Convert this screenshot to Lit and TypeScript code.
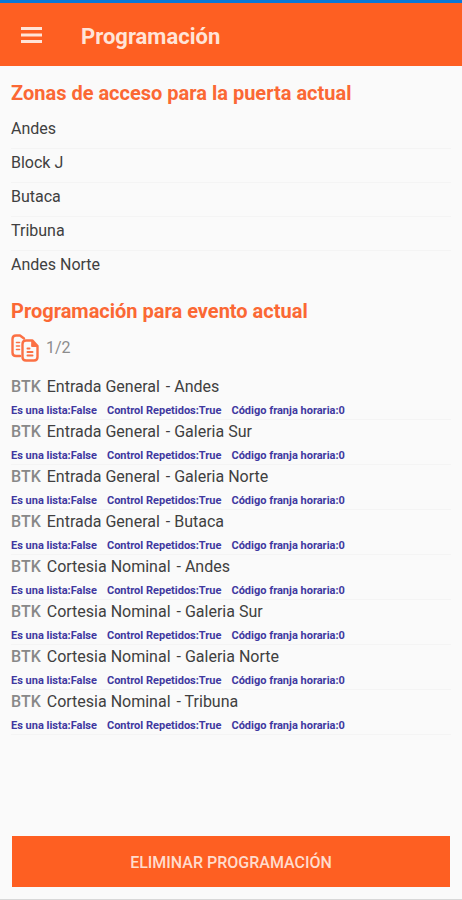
import { LitElement, html, css } from "lit";
import { customElement, state } from "lit/decorators.js";

interface Ticket {
  kind: string;
  zone: string;
}

@customElement("app-root")
export class AppRoot extends LitElement {
  static styles = css`
    :host {
      display: flex;
      flex-direction: column;
      box-sizing: border-box;
      min-height: 100vh;
      background: #fafafa;
      border-top: 3px solid #0a78d7;
      border-bottom: 1px solid #d8d8d8;
      font-family: Roboto, "Liberation Sans", sans-serif;
      color: #404040;
    }
    .bar {
      display: flex;
      align-items: center;
      gap: 38px;
      height: 63px;
      padding: 0 20px;
      background: #fe5f22;
      color: #ffe4d8;
    }
    .menu {
      display: flex;
      padding: 0;
      border: 0;
      background: none;
      color: inherit;
    }
    .title {
      margin: 0;
      font-size: 22px;
      line-height: 28px;
      font-weight: 700;
      padding-top: 4px;
    }
    .content {
      flex: 1;
      padding: 13px 11px 24px;
    }
    .heading {
      margin: 0;
      font-size: 20px;
      line-height: 28px;
      font-weight: 700;
      color: #fb6834;
    }
    .list {
      list-style: none;
      margin: 0;
      padding: 0;
    }
    .zones {
      padding: 8px 0 12px;
    }
    .zone {
      box-sizing: border-box;
      height: 34px;
      padding-top: 4px;
      font-size: 16px;
      line-height: 20px;
      border-bottom: 1px solid #f4f4f4;
    }
    .zone:last-child {
      border-bottom-color: transparent;
    }
    .count {
      display: flex;
      align-items: center;
      gap: 7px;
      height: 28px;
      margin: 9px 0 13px;
      font-size: 16px;
      line-height: 20px;
      color: #8c8c8c;
    }
    .ticket {
      box-sizing: border-box;
      height: 45px;
      padding-top: 2px;
      border-bottom: 1px solid #f4f4f4;
    }
    .name {
      display: flex;
      gap: 6px;
      font-size: 16px;
      line-height: 20px;
    }
    .code {
      font-weight: 500;
      color: #888888;
    }
    .kind {
      display: flex;
      gap: 6px;
    }
    .facts {
      display: flex;
      gap: 10px;
      padding-top: 7px;
      font-size: 11px;
      line-height: 14px;
      font-weight: 700;
      color: #4038a0;
    }
    .footer {
      padding: 0 12px 12px;
    }
    .remove {
      display: block;
      width: 100%;
      height: 51px;
      padding: 2px 0 0;
      border: 0;
      background: #fe5f22;
      color: #ffdccd;
      font-family: inherit;
      font-size: 16px;
      line-height: 20px;
      font-weight: 500;
    }
  `;

  @state() private zones = ["Andes", "Block J", "Butaca", "Tribuna", "Andes Norte"];

  @state() private tickets: Ticket[] = [
    { kind: "Entrada General", zone: "Andes" },
    { kind: "Entrada General", zone: "Galeria Sur" },
    { kind: "Entrada General", zone: "Galeria Norte" },
    { kind: "Entrada General", zone: "Butaca" },
    { kind: "Cortesia Nominal", zone: "Andes" },
    { kind: "Cortesia Nominal", zone: "Galeria Sur" },
    { kind: "Cortesia Nominal", zone: "Galeria Norte" },
    { kind: "Cortesia Nominal", zone: "Tribuna" },
  ];

  render() {
    return html`
      <header class="bar">
        <button class="menu" type="button" aria-label="Menú">
          <svg width="23" height="18" viewBox="0 0 23 18" fill="currentColor" aria-hidden="true">
            <path d="M1 1h21v3H1zM1 7.500h21v3H1zM1 14h21v3H1z" />
          </svg>
        </button>
        <h1 class="title">Programación</h1>
      </header>
      <main class="content">
        <section>
          <h2 class="heading">Zonas de acceso para la puerta actual</h2>
          <ul class="list zones">
            ${this.zones.map((z) => html`<li class="zone">${z}</li>`)}
          </ul>
        </section>
        <section>
          <h2 class="heading">Programación para evento actual</h2>
          <div class="count">
            <svg width="28" height="28" viewBox="0 0 28 28" fill="none" stroke="#fb7044" stroke-width="2.4" stroke-linejoin="round" stroke-linecap="round" aria-hidden="true">
              <path d="M9 22H5q-3.500 0-3.500-3.500V5Q1.500 1.500 5 1.500h4l4 3" />
              <path d="M5.500 8.500h3M5.500 12h3M5.500 15.500h3" stroke-width="1.600" />
              <path d="M15 6.500h6.500l5 5.500v11q0 3.500-3.500 3.500h-8q-3.500 0-3.500-3.500V10q0-3.500 3.500-3.500z" />
              <path d="M21 6.500l5.500 6h-5.500z" fill="#fb7044" stroke-width="1" />
              <path d="M16.500 14.500h2M16.500 18h5M16.500 21.500h5" stroke-width="2" />
            </svg>
            <span>1/2</span>
          </div>
          <ul class="list">
            ${this.tickets.map(
              (t) => html`
                <li class="ticket">
                  <div class="name">
                    <span class="code">BTK</span>
                    <span class="kind"><span>${t.kind}</span><span>- ${t.zone}</span></span>
                  </div>
                  <div class="facts">
                    <span>Es una lista:False</span>
                    <span>Control Repetidos:True</span>
                    <span>Código franja horaria:0</span>
                  </div>
                </li>
              `
            )}
          </ul>
        </section>
      </main>
      <footer class="footer">
        <button class="remove" type="button">ELIMINAR PROGRAMACIÓN</button>
      </footer>
    `;
  }
}
